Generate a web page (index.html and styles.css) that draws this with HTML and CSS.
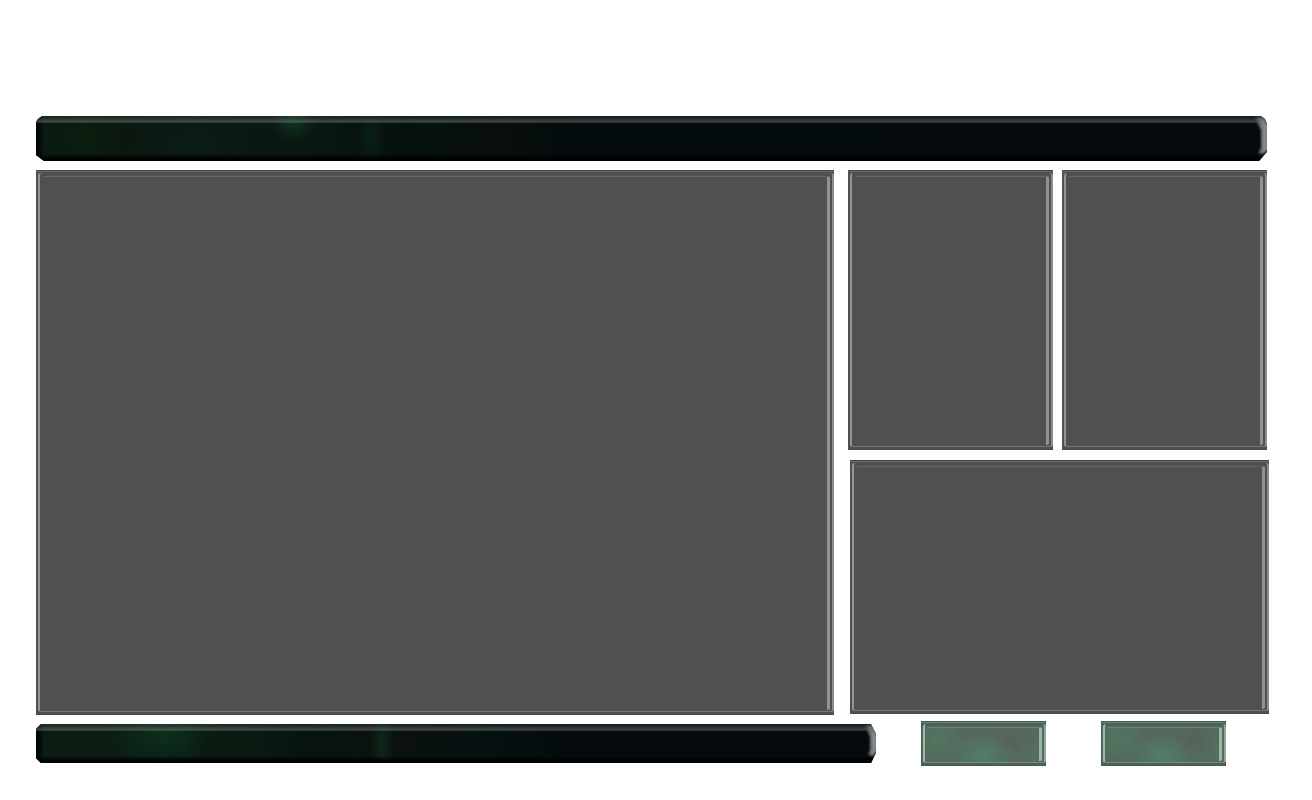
FILE: index.html
```html
<!DOCTYPE html>
<html lang="en">
<head>
    <meta charset="UTF-8">
    <meta name="viewport" content="width=device-width, initial-scale=1.0">
    <title>Panels</title>
    <link rel="stylesheet" href="styles.css">
</head>
<body>
    <div class="page">
        <header class="bar bar-top">
            <svg class="cap" viewBox="0 0 16 45" preserveAspectRatio="none" aria-hidden="true">
                <defs>
                    <linearGradient id="capShine" x1="0" x2="1" y1="0" y2="0">
                        <stop offset="0" stop-color="#3c4343"/>
                        <stop offset="0.6" stop-color="#7b8080"/>
                        <stop offset="1" stop-color="#8d9292"/>
                    </linearGradient>
                    <filter id="soft"><feGaussianBlur stdDeviation="0.8"/></filter>
                </defs>
                <path d="M4 2 L11 1 L17 9 L17 34 L12 38 L7 37 L10 32 L10 14 Z" fill="url(#capShine)" filter="url(#soft)"/>
            </svg>
        </header>

        <main class="content">
            <section class="panel panel-main"></section>
            <div class="side">
                <div class="side-top">
                    <section class="panel"></section>
                    <section class="panel"></section>
                </div>
                <section class="panel panel-wide"></section>
            </div>
        </main>

        <footer class="footer">
            <div class="bar bar-bottom">
                <svg class="cap" viewBox="0 0 16 39" preserveAspectRatio="none" aria-hidden="true">
                    <path d="M5 2 L11 1 L17 11 L17 27 L13 32 L8 31 L10 26 L10 13 Z" fill="url(#capShine)" filter="url(#soft)"/>
                </svg>
            </div>
            <nav class="buttons">
                <button type="button" class="panel glass" aria-label="Back"></button>
                <button type="button" class="panel glass" aria-label="Next"></button>
            </nav>
        </footer>
    </div>
</body>
</html>
```
FILE: styles.css
```css
* {
    box-sizing: border-box;
}
body {
    margin: 0;
    background: #fff;
    font-family: Arial, sans-serif;
}
.page {
    display: flex;
    flex-direction: column;
    min-height: 100vh;
    padding: 116px 43px 34px 36px;
}

/* dark bars */
.bar {
    --shine: linear-gradient(to bottom, rgba(90, 105, 100, 0.2) 0, rgba(90, 105, 100, 0.3) 3px, rgba(120, 130, 125, 0.42) 4px, rgba(120, 130, 125, 0.42) 6px, rgba(120, 130, 125, 0.3) 7px, transparent 7px);
    --shade: linear-gradient(to top, #000 0, rgba(0, 0, 0, 0.85) 3px, transparent 7px);
    --edge: linear-gradient(to right, #000 0, #020a06 4px, transparent 8px);
    display: flex;
    justify-content: flex-end;
}
.bar-top {
    height: 45px;
    margin-right: 2px;
    background:
        var(--shine), var(--shade), var(--edge),
        radial-gradient(ellipse 24px 20px at 258px 6px, rgba(20, 80, 50, 0.5), transparent),
        radial-gradient(ellipse 14px 45px at 335px 50%, rgba(10, 50, 32, 0.4), transparent),
        radial-gradient(ellipse 70px 40px at 160px 60%, rgba(12, 36, 26, 0.4), transparent),
        radial-gradient(ellipse 50px 40px at 50px 50%, rgba(10, 34, 14, 0.5), transparent),
        radial-gradient(ellipse 30px 20px at 85px 50%, rgba(14, 18, 12, 0.7), transparent),
        linear-gradient(to right, #0a1a10 0, #0b1711 20%, #06110e 30%, #080f0c 38%, #040b0d 43%, #040a0d 100%);
    clip-path: polygon(0 6px, 2px 3px, 6px 0, calc(100% - 6px) 0, calc(100% - 2px) 3px, 100% 8px, 100% 36px, calc(100% - 8px) 100%, 8px 100%, 0 39px);
}
.bar-bottom {
    flex: 1;
    height: 39px;
    background:
        var(--shine), var(--shade), var(--edge),
        radial-gradient(ellipse 60px 34px at 130px 30%, rgba(14, 60, 34, 0.6), transparent),
        radial-gradient(ellipse 12px 60px at 346px 50%, rgba(14, 58, 38, 0.5), transparent),
        radial-gradient(ellipse 24px 20px at 170px 18px, rgba(4, 10, 6, 0.5), transparent),
        linear-gradient(to right, #0b1d12 0, #0b1b12 24%, #071310 32%, #0b120e 42%, #061011 54%, #040a0d 64%, #040a0d 100%);
    clip-path: polygon(0 5px, 5px 0, calc(100% - 5px) 0, 100% 10px, 100% 29px, calc(100% - 5px) 100%, 5px 100%, 0 34px);
}
.cap {
    width: 16px;
    height: 100%;
}

/* bevelled panels */
.content {
    display: grid;
    grid-template-columns: 798fr 421fr;
    gap: 14px;
    flex: 1;
    margin: 9px 0 6px;
}
.panel {
    position: relative;
    border: 0;
    padding: 0;
    background: #505050;
    box-shadow: inset 0 1px #484848, inset 0 2px #686868, inset 0 -1px #484848;
}
.panel::before,
.panel::after {
    content: "";
    position: absolute;
}
.panel::before {
    inset: 3px 0 3px 2px;
    border-left: 2px solid #949494;
    border-right: 2px solid #8c8c8c;
    border-bottom: 1px solid #777;
    border-radius: 3px;
}
.panel::after {
    inset: 6px 4px 5px 7px;
    border-top: 1px solid #666;
    border-right: 3px solid #929292;
    border-radius: 0 2px 2px 0;
}
.side {
    display: flex;
    flex-direction: column;
    gap: 10px;
}
.side-top {
    display: grid;
    grid-template-columns: 1fr 1fr;
    gap: 9px;
    flex: 280;
    margin-right: 2px;
}
.panel-wide {
    flex: 254;
    margin: 0 0 1px 2px;
}

.footer {
    display: flex;
    align-items: center;
    gap: 45px;
    padding-right: 43px;
}
.buttons {
    display: flex;
    gap: 55px;
}
.glass {
    width: 125px;
    height: 45px;
    background:
        radial-gradient(ellipse 26px 24px at 18px 18px, rgba(80, 125, 100, 0.7), transparent),
        radial-gradient(ellipse 34px 24px at 62px 34px, rgba(80, 130, 108, 0.8), transparent),
        radial-gradient(ellipse 24px 16px at 90px 20px, rgba(88, 94, 86, 0.7), transparent),
        radial-gradient(ellipse 26px 26px at 116px 28px, rgba(85, 115, 98, 0.6), transparent),
        #55685c;
    box-shadow: inset 0 0 0 1px #465a50, inset 0 2px #6a8275, inset 0 5px #4d6156, inset 0 -3px #4d6156;
}
.glass::before {
    border-color: transparent #8ea799 #748c7f #a0b8ab;
}
.glass::after {
    border-color: #668273 #9bb5a7;
}
```
